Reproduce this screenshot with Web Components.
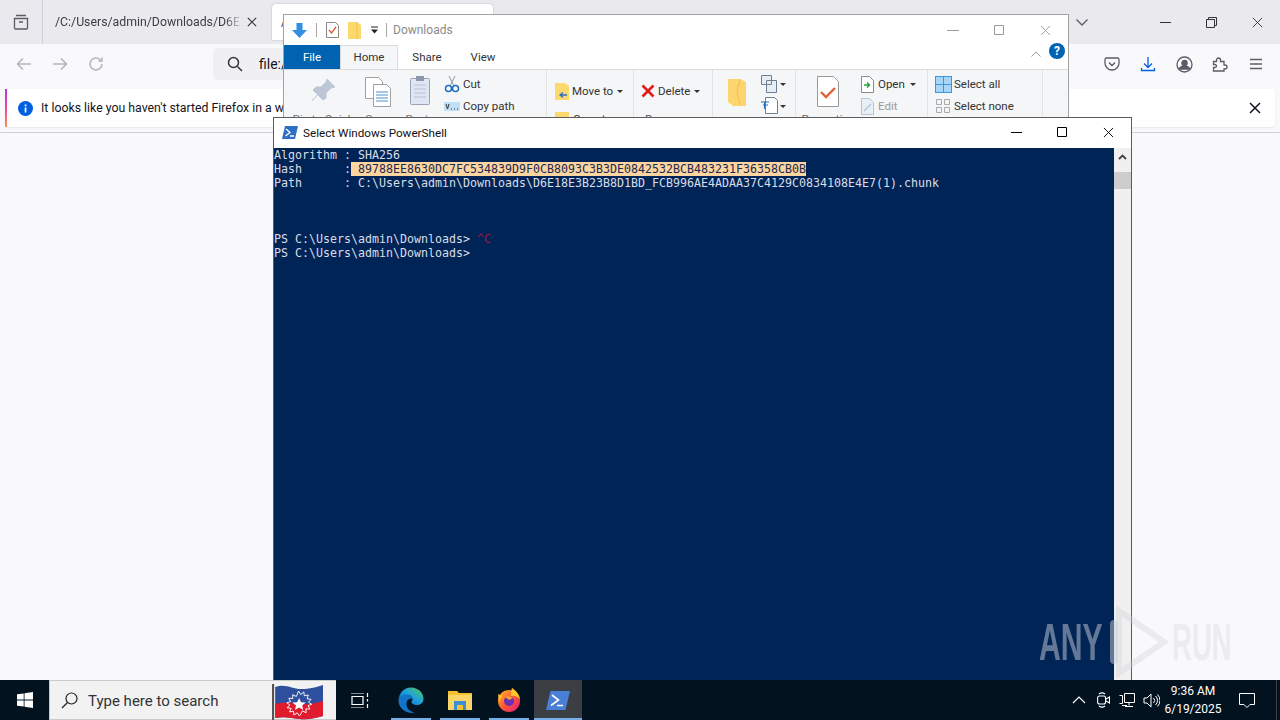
<!DOCTYPE html>
<html>
<head>
<meta charset="utf-8">
<title>Desktop</title>
<style>
  html, body { margin: 0; height: 100%; overflow: hidden; }
  body { font-family: Roboto, "Liberation Sans", sans-serif; background: #f9f9fb; }
</style>
</head>
<body>
<desk-top>
  <firefox-window></firefox-window>
  <explorer-window></explorer-window>
  <ps-window>
    <ps-line>Algorithm : SHA256</ps-line>
    <ps-line>Hash      :<ps-sel> 89788EE8630DC7FC534839D9F0CB8093C3B3DE0842532BCB483231F36358CB0B</ps-sel></ps-line>
    <ps-line>Path      : C:\Users\admin\Downloads\D6E18E3B23B8D1BD_FCB996AE4ADAA37C4129C0834108E4E7(1).chunk</ps-line>
    <ps-line></ps-line>
    <ps-line></ps-line>
    <ps-line></ps-line>
    <ps-line>PS C:\Users\admin\Downloads> <ps-err>^C</ps-err></ps-line>
    <ps-line>PS C:\Users\admin\Downloads></ps-line>
  </ps-window>
  <task-bar></task-bar>
  <any-run></any-run>
</desk-top>

<script>
const XMARK = '<path d="M1 1l10 10M11 1L1 11"/>';

class DeskTop extends HTMLElement {
  connectedCallback() {
    this.attachShadow({ mode: 'open' });
    this.shadowRoot.innerHTML = `
      <style>
        :host { display: block; position: relative; width: 1280px; height: 720px; overflow: hidden; }
      </style>
      <slot></slot>`;
  }
}

class FirefoxWindow extends HTMLElement {
  connectedCallback() {
    this.attachShadow({ mode: 'open' });
    this.shadowRoot.innerHTML = `
      <style>
        :host { display: block; position: absolute; inset: 0 0 40px 0; background: #f9f9fb; color: #15141a; font-size: 12.3px; }
        svg { display: block; fill: none; stroke: #5b5b66; stroke-width: 1.3; }
        .tabs { display: flex; height: 44px; background: #eaeaee; align-items: stretch; }
        .list { width: 42px; border-right: 1px solid #cfcfd8; display: flex; align-items: center; justify-content: center; }
        .tab { width: 229px; display: flex; align-items: center; padding-left: 12px; box-sizing: border-box; color: #3c3c44; }
        .tab span { width: 188px; overflow: hidden; white-space: nowrap; -webkit-mask-image: linear-gradient(90deg,#000 170px,transparent 188px); }
        .tab svg { margin-left: 4px; stroke: #33333a; stroke-width: 1.4; }
        .tab.on { width: 221px; background: #fff; border-radius: 4px 4px 0 0; margin: 4px 0; padding-left: 9px; box-shadow: 0 0 2px rgba(0,0,0,.25); }
        .fill { flex: 1; display: flex; justify-content: flex-end; align-items: center; padding-right: 54px; }
        .ctl { width: 46px; display: flex; align-items: center; justify-content: center; }
        .ctl svg { stroke: #33333a; stroke-width: 1; }
        .bar { display: flex; height: 44px; padding: 0 6px 4px; align-items: center; box-sizing: border-box; }
        .btn { width: 36px; height: 36px; display: flex; align-items: center; justify-content: center; }
        .btn.off svg { stroke: #b4b4bc; stroke-width: 1.5; }
        .url { width: 700px; height: 32px; margin-left: 99px; background: #f0f0f4; border-radius: 4px; display: flex; align-items: center; font-size: 14px; }
        .url svg { margin: 0 16px 0 14px; stroke: #33333a; stroke-width: 1.5; }
        .right { margin-left: auto; display: flex; }
        .note { margin: 1px 5px 0 5px; height: 38px; background: #fff; border-radius: 4px; display: flex; align-items: center; position: relative; box-shadow: 0 1px 2px rgba(0,0,0,.08); }
        .note::before { content: ""; position: absolute; left: 0; top: 0; bottom: 0; width: 2px; background: linear-gradient(#b833e1, #f0469a 50%, #ff8a50); }
        .note svg.i { margin: 0 8px 0 13px; stroke: none; }
        .note .x { position: absolute; right: 14px; stroke: #15141a; stroke-width: 1.5; }
        .rule { margin-top: 5px; border-top: 1px solid #cfcfd8; }
      </style>
      <div class="tabs">
        <div class="list"><svg width="18" height="18" viewBox="0 0 18 18"><path d="M4 2.500h10M2.500 5.500h13v9.500a1 1 0 0 1-1 1h-11a1 1 0 0 1-1-1zM7 9h4"/></svg></div>
        <div class="tab"><span>/C:/Users/admin/Downloads/D6E18E3B23B8D1BD</span><svg width="10" height="10" viewBox="0 0 12 12">${XMARK}</svg></div>
        <div class="tab on">/C:/Users/admin/Downloads/D6</div>
        <div class="fill"><svg width="12" height="7" viewBox="0 0 12 7"><path d="M.500.500L6 6 11.500.500"/></svg></div>
        <div class="ctl"><svg width="11" height="1" viewBox="0 0 11 1"><path d="M0 .500h11"/></svg></div>
        <div class="ctl"><svg width="11" height="11" viewBox="0 0 11 11"><path d="M.500 2.500h8v8h-8zM2.500 2.500v-2h8v8h-2"/></svg></div>
        <div class="ctl"><svg width="11" height="11" viewBox="0 0 12 12">${XMARK}</svg></div>
      </div>
      <div class="bar">
        <div class="btn off"><svg width="16" height="14" viewBox="0 0 16 14"><path d="M15 7H1.500M7 1.500L1.500 7 7 12.500"/></svg></div>
        <div class="btn off"><svg width="16" height="14" viewBox="0 0 16 14"><path d="M1 7h13.500M9 1.500L14.500 7 9 12.500"/></svg></div>
        <div class="btn off"><svg width="16" height="16" viewBox="0 0 16 16"><path d="M14 8a6 6 0 1 1-2-4.500L14 5M14 1.500V5h-3.500"/></svg></div>
        <div class="url"><svg width="16" height="16" viewBox="0 0 16 16"><circle cx="6.500" cy="6.500" r="5"/><path d="M10.500 10.500L15 15"/></svg>file:///C:/Users/admin/Downloads</div>
        <div class="right">
          <div class="btn"><svg width="16" height="16" viewBox="0 0 16 16"><path d="M2.500 2h11A1.500 1.500 0 0 1 15 3.500V7A7 7 0 0 1 1 7V3.500A1.500 1.500 0 0 1 2.500 2zM5 6.500l3 3 3-3"/></svg></div>
          <div class="btn"><svg width="16" height="16" viewBox="0 0 16 16" style="stroke:#0060df"><path d="M8 1v10M4 7.500L8 11.500 12 7.500M1.500 12v2.500h13V12"/></svg></div>
          <div class="btn"><svg width="17" height="17" viewBox="0 0 17 17"><circle cx="8.500" cy="8.500" r="7.500"/><circle cx="8.500" cy="7" r="2.600" fill="#5b5b66"/><path d="M3.500 13a5 3 0 0 1 10 0z" fill="#5b5b66"/></svg></div>
          <div class="btn"><svg width="16" height="16" viewBox="0 0 16 16"><path d="M1.500 5.500h3V4a2 2 0 0 1 4 0v1.500h3.500V9h1a2 2 0 0 1 0 4h-1v2H1.500v-3.500H3a1.500 1.500 0 0 0 0-3H1.500z"/></svg></div>
          <div class="btn"><svg width="14" height="12" viewBox="0 0 14 12"><path d="M1 1.500h12M1 6h12M1 10.500h12"/></svg></div>
        </div>
      </div>
      <div class="note">
        <svg class="i" width="15" height="15" viewBox="0 0 15 15"><circle cx="7.500" cy="7.500" r="7.500" fill="#0060df"/><rect x="6.700" y="6.500" width="1.700" height="5" fill="#fff"/><rect x="6.700" y="3.500" width="1.700" height="1.800" fill="#fff"/></svg>
        It looks like you haven't started Firefox in a while. Do you want to clean it up for a fresh, like-new experience?
        <svg class="x" width="12" height="12" viewBox="0 0 12 12">${XMARK}</svg>
      </div>
      <div class="rule"></div>`;
  }
}

class ExplorerWindow extends HTMLElement {
  connectedCallback() {
    this.attachShadow({ mode: 'open' });
    this.shadowRoot.innerHTML = `
      <style>
        :host { display: block; position: absolute; left: 283px; top: 14px; width: 786px; height: 130px; box-sizing: border-box; border: 1px solid #a3a3a3; background: #fff; font-size: 11.5px; color: #333; overflow: hidden; }
        svg { display: block; flex: none; }
        .title { height: 30px; display: flex; align-items: center; padding-left: 7px; }
        .sep { width: 1px; height: 14px; background: #a9a9a9; margin: 0 8px; }
        .name { color: #8b8b8b; font-size: 12px; margin-bottom: 1px; }
        .caps { margin-left: auto; display: flex; }
        .caps div { width: 46px; height: 30px; display: flex; align-items: center; justify-content: center; }
        .caps svg { stroke: #9a9a9a; fill: none; }
        .menu { height: 24px; display: flex; align-items: stretch; position: relative; }
        .menu div { display: flex; align-items: center; justify-content: center; padding-bottom: 1px; box-sizing: border-box; }
        .file { width: 56px; background: #0063b1; color: #fff; }
        .home { width: 58px; background: #f5f6f7; border: 1px solid #dadbdc; border-bottom: 0; }
        .share { width: 58px; }
        .view { width: 54px; }
        .menu .help { position: absolute; right: 3px; top: -2px; width: 16px; height: 16px; padding: 0; border-radius: 50%; background: #0063b1; color: #fff; font-weight: 700; font-size: 12px; }
        .up { position: absolute; right: 27px; top: 6px; }
        .ribbon { height: 75px; background: #f5f6f7; border-top: 1px solid #dadbdc; display: flex; }
        .grp { border-right: 1px solid #e2e3e4; box-sizing: border-box; position: relative; display: flex; }
        .col { display: flex; flex-direction: column; align-items: center; padding-top: 5px; color: #777; }
        .col svg { height: 34px; margin-bottom: 3px; }
        .stack { display: flex; flex-direction: column; gap: 6px; padding-top: 6px; }
        .row { display: flex; align-items: center; gap: 4px; height: 16px; white-space: nowrap; }
        .row.dim { color: #9a9a9a; }
        .caret { width: 0; height: 0; border: 3px solid transparent; border-top: 3px solid #333; border-bottom: 0; margin-left: 1px; }
      </style>
      <div class="title">
        <svg width="17" height="17" viewBox="0 0 17 17"><path d="M5.500 1h6v7h4.500L8.500 16 1 8h4.500z" fill="#2f8fe0"/></svg>
        <div class="sep"></div>
        <svg width="13" height="16" viewBox="0 0 13 16" style="margin-left:1px"><path d="M.500.500h9l3 3v12h-12z" fill="#fff" stroke="#888"/><path d="M3 8l2.500 3L10 5" fill="none" stroke="#d9573a" stroke-width="1.300"/></svg>
        <svg width="13" height="17" viewBox="0 0 13 17" style="margin-left:9px"><path d="M0 0h9l4 3v14H0z" fill="#fbd96f"/><path d="M9 0v17" stroke="#f0c24a"/></svg>
        <svg width="9" height="8" viewBox="0 0 9 8" style="margin-left:9px"><path d="M1 1h7" stroke="#222"/><path d="M1 3.500h7L4.500 7.500z" fill="#222"/></svg>
        <div class="sep" style="margin:0 6px 0 7px"></div>
        <span class="name">Downloads</span>
        <div class="caps">
          <div><svg width="12" height="1" viewBox="0 0 12 1"><path d="M0 .500h12"/></svg></div>
          <div><svg width="10" height="10" viewBox="0 0 10 10"><path d="M.500.500h9v9h-9z"/></svg></div>
          <div><svg width="11" height="11" viewBox="0 0 12 12">${XMARK}</svg></div>
        </div>
      </div>
      <div class="menu">
        <div class="file">File</div><div class="home">Home</div><div class="share">Share</div><div class="view">View</div>
        <svg class="up" width="10" height="6" viewBox="0 0 10 6"><path d="M.500 5.500L5 1l4.500 4.500" fill="none" stroke="#999"/></svg>
        <div class="help">?</div>
      </div>
      <div class="ribbon">
        <div class="grp" style="width:263px;padding-left:6px">
          <div class="col" style="width:66px">
            <svg width="26" height="34" viewBox="0 0 26 34"><path d="M17 4l8 8-4 1-5 5 0 5-3 2-10-10 3-3 5 0 5-5zM8 19l-6 7" fill="#bcc6d4" stroke="#bcc6d4"/></svg>Pin to Quick</div>
          <div class="col" style="width:44px">
            <svg width="26" height="34" viewBox="0 0 26 34"><path d="M.500 2.500h13l4 4v17h-17z" fill="#fff" stroke="#a0a0a0"/><path d="M8.500 9.500h13l4 4v18h-17z" fill="#fff" stroke="#a0a0a0"/><path d="M11 17h12M11 20h12M11 23h12M11 26h12" stroke="#4a8fd6"/></svg>Copy</div>
          <div class="col" style="width:40px">
            <svg width="20" height="34" viewBox="0 0 20 34"><rect x=".500" y="3.500" width="19" height="26" rx="1" fill="#dfe5f2" stroke="#9aa3b5"/><rect x="6" y="1" width="8" height="5" fill="#8e98ab"/><path d="M4 10h12M4 14h12M4 18h12M4 22h12" stroke="#b8c2d6"/></svg>Paste</div>
          <div class="stack" style="padding-left:4px">
            <div class="row" style="gap:3px"><svg width="16" height="18" viewBox="0 0 16 18"><path d="M5 1l5 10M11 1L6 11" stroke="#8a9bb0"/><circle cx="4.500" cy="13.500" r="3" fill="none" stroke="#1e6fc0" stroke-width="1.500"/><circle cx="11.500" cy="13.500" r="3" fill="none" stroke="#1e6fc0" stroke-width="1.500"/></svg>Cut</div>
            <div class="row" style="gap:3px"><svg width="16" height="9" viewBox="0 0 16 9"><rect width="16" height="9" fill="#bfe0f7"/><path d="M2 2l1.500 5L5 2M7 7h1M10 7h1M13 7h1" stroke="#333" fill="none"/></svg>Copy path</div>
          </div>
        </div>
        <div class="grp" style="width:87px;padding:4px 0 0 8px">
          <div class="stack" style="padding:0;gap:12px">
            <div class="row" style="margin-top:9px;gap:3px"><svg width="14" height="17" viewBox="0 0 14 17"><path d="M0 0h10l4 3v14H0z" fill="#fbd96f"/><path d="M12 12H6M8 9.500L5 12l3 2.500" fill="none" stroke="#2f6fc0" stroke-width="1.300"/></svg>Move to<i class="caret"></i></div>
            <div class="row"><svg width="14" height="14" viewBox="0 0 14 14"><path d="M0 0h14v14H0z" fill="#fbd96f"/></svg>Copy to<i class="caret"></i></div>
          </div>
        </div>
        <div class="grp" style="width:79px;padding:13px 0 0 7px">
          <div class="stack" style="padding:0;gap:12px">
            <div class="row" style="gap:3px"><svg width="14" height="14" viewBox="0 0 14 14"><path d="M1.500 1.500l11 11M12.500 1.500l-11 11" stroke="#e01c1c" stroke-width="2.600"/></svg>Delete<i class="caret"></i></div>
            <div class="row" style="color:#555;padding-left:4px">Rename</div>
          </div>
        </div>
        <div class="grp" style="width:83px;padding-left:11px">
          <div class="col" style="width:26px;padding-top:7px;color:#666">
            <svg width="20" height="32" viewBox="0 0 20 32"><path d="M1 1h12l6 3v24H6l-5-4z" fill="#fcd56f"/><path d="M13 1l-3 12 3 14" fill="none" stroke="#f2bf4c"/></svg>New</div>
          <div class="stack" style="padding:6px 0 0 11px;gap:6px">
            <div class="row" style="gap:0"><svg width="18" height="18" viewBox="0 0 18 18"><path d="M.500.500h10v9h-10zM5.500 5.500h10v12h-10z" fill="#e6edf5" stroke="#6f7f92"/></svg><i class="caret"></i></div>
            <div class="row" style="gap:0"><svg width="18" height="18" viewBox="0 0 18 18"><path d="M4.500.500h9l3 3v13h-12z" fill="#fff" stroke="#6f7f92"/><path d="M0 5h8M2 8h5M3.500 5v7" stroke="#1e6fc0"/></svg><i class="caret"></i></div>
          </div>
        </div>
        <div class="grp" style="width:132px;padding-left:4px">
          <div class="col" style="width:56px;color:#666">
            <svg width="22" height="34" viewBox="0 0 22 34"><path d="M.500 1.500h16l5 5v25h-21z" fill="#fff" stroke="#999"/><path d="M4 17l5 5 9-9" fill="none" stroke="#e2603a" stroke-width="2.400"/></svg>Properties</div>
          <div class="stack" style="padding:6px 0 0 5px;gap:6px">
            <div class="row"><svg width="13" height="17" viewBox="0 0 13 17"><path d="M.500.500h8l4 4v12h-12z" fill="#fff" stroke="#8a8a8a"/><path d="M3 9h5M6 6.500L8.500 9 6 11.500" stroke="#2fa33a" fill="none" stroke-width="1.500"/></svg>Open<i class="caret"></i></div>
            <div class="row dim"><svg width="13" height="17" viewBox="0 0 13 17"><path d="M.500.500h8l4 4v12h-12z" fill="#e8eff6" stroke="#b6c4d2"/><path d="M3 13L10 6" stroke="#b6c4d2" stroke-width="1.500"/></svg>Edit</div>
          </div>
        </div>
        <div class="grp" style="width:115px;padding-left:7px">
          <div class="stack" style="padding-top:6px;gap:6px">
            <div class="row" style="gap:2px"><svg width="17" height="17" viewBox="0 0 17 17"><rect width="17" height="17" fill="#3b96e4"/><path d="M1 1h7v7H1zM9 1h7v7H9zM1 9h7v7H1zM9 9h7v7H9z" fill="#a9d5f7"/></svg>Select all</div>
            <div class="row" style="gap:3px"><svg width="14" height="14" viewBox="0 0 14 14" style="margin:0 1px"><path d="M.500.500h5v5h-5zM8.500.500h5v5h-5zM.500 8.500h5v5h-5zM8.500 8.500h5v5h-5z" fill="none" stroke="#aaa"/></svg>Select none</div>
          </div>
        </div>
      </div>`;
  }
}

class PsWindow extends HTMLElement {
  connectedCallback() {
    this.attachShadow({ mode: 'open' });
    this.shadowRoot.innerHTML = `
      <style>
        :host { display: flex; flex-direction: column; position: absolute; left: 273px; top: 117px; width: 859px; height: 563px; box-sizing: border-box; border: 1px solid #5c5c5c; border-bottom: 0; background: #fff; }
        .title { height: 30px; display: flex; align-items: center; font-size: 11.7px; color: #111; padding-left: 8px; flex: none; }
        .title span { margin: 0 0 1px 5px; }
        .caps { margin-left: auto; display: flex; }
        .caps div { width: 46px; height: 30px; display: flex; align-items: center; justify-content: center; padding-bottom: 2px; box-sizing: border-box; }
        .caps svg { display: block; fill: none; stroke: #000; }
        .body { flex: 1; display: flex; min-height: 0; }
        .console { flex: 1; background: #012456; color: #d9dde7; font: 11.63px/14px "DejaVu Sans Mono", monospace; overflow: hidden; }
        .scroll { width: 17px; background: #f0f0f0; display: flex; flex-direction: column; align-items: center; }
        .arrow { height: 17px; display: flex; align-items: center; justify-content: center; }
        .thumb { width: 100%; height: 17px; margin-top: 7px; background: #cdcdcd; }
      </style>
      <div class="title">
        <svg width="16" height="13" viewBox="0 0 16 13" style="margin-bottom:2px"><path d="M3 0h13l-3 13H0z" fill="#2c6fc4"/><path d="M4 3l4 3.500L3.500 10M8 10h4" fill="none" stroke="#fff" stroke-width="1.300"/></svg>
        <span>Select Windows PowerShell</span>
        <div class="caps">
          <div style="width:45px"><svg width="11" height="1" viewBox="0 0 11 1"><path d="M0 .500h11"/></svg></div>
          <div><svg width="10" height="10" viewBox="0 0 10 10"><path d="M.500.500h9v9h-9z"/></svg></div>
          <div><svg width="11" height="11" viewBox="0 0 12 12">${XMARK}</svg></div>
        </div>
      </div>
      <div class="body">
        <div class="console"><slot></slot></div>
        <div class="scroll">
          <div class="arrow"><svg width="9" height="6" viewBox="0 0 9 6"><path d="M1 5l3.500-3.500L8 5" fill="none" stroke="#444" stroke-width="1.800"/></svg></div>
          <div class="thumb"></div>
        </div>
      </div>`;
  }
}

// no whitespace in these three shadow roots: the console text runs in white-space: pre
class PsLine extends HTMLElement {
  connectedCallback() {
    this.attachShadow({ mode: 'open' });
    this.shadowRoot.innerHTML = '<style>:host { display: block; height: 14px; white-space: pre; }</style><slot></slot>';
  }
}

class PsSel extends HTMLElement {
  connectedCallback() {
    this.attachShadow({ mode: 'open' });
    this.shadowRoot.innerHTML = '<style>:host { display: inline-block; height: 14px; background: #fdd5a0; color: #1b2a50; }</style><slot></slot>';
  }
}

class PsErr extends HTMLElement {
  connectedCallback() {
    this.attachShadow({ mode: 'open' });
    this.shadowRoot.innerHTML = '<style>:host { color: #a01540; }</style><slot></slot>';
  }
}

class TaskBar extends HTMLElement {
  connectedCallback() {
    this.attachShadow({ mode: 'open' });
    this.shadowRoot.innerHTML = `
      <style>
        :host { display: flex; position: absolute; left: 0; right: 0; bottom: 0; height: 40px; background: #03121f; color: #fff; font-size: 12px; }
        svg { display: block; flex: none; }
        .start { width: 49px; display: flex; align-items: center; justify-content: center; }
        .search { width: 287px; box-sizing: border-box; background: #f2f2f2; border: 1px solid #c8c8c8; border-width: 1px 0 1px 1px; display: flex; align-items: center; color: #333; font-size: 15px; padding: 1px 0 0 11px; gap: 10px; position: relative; }
        .flag { position: absolute; left: 222px; top: 2px; }
        .task { width: 48px; display: flex; align-items: center; justify-content: center; position: relative; margin-right: 1px; }
        .task.run::after { content: ""; position: absolute; left: 4px; right: 4px; bottom: 0; height: 2px; background: #76aee6; }
        .task.active { background: #3b3e43; margin-right: 0; }
        .task.active::after { left: 0; right: 0; }
        .tray { margin-left: auto; display: flex; align-items: center; padding-right: 9px; position: relative; }
        .tray .t { width: 24px; display: flex; justify-content: center; }
        .tray .t svg { stroke: #fff; fill: none; }
        .clock { width: 60px; text-align: center; line-height: 18px; font-size: 12px; }
        .msg { width: 48px; display: flex; justify-content: center; }
        .edge { position: absolute; right: 3px; top: 0; bottom: 0; width: 1px; background: #3b3e43; }
      </style>
      <div class="start"><svg width="16" height="16" viewBox="0 0 16 16" fill="#fff"><path d="M0 2.300l6.700-.9v6.200H0zM7.500 1.300L16 0v7.600H7.500zM0 8.400h6.700v6.200L0 13.700zM7.500 8.400H16V16l-8.500-1.200z"/></svg></div>
      <div class="search">
        <svg width="17" height="17" viewBox="0 0 17 17" fill="none" stroke="#222" stroke-width="1.200"><circle cx="10.500" cy="6.500" r="5.500"/><path d="M6.500 10.500L1 16"/></svg>
        Type here to search
        <svg class="flag" width="51" height="38" viewBox="0 0 48 38" preserveAspectRatio="none">
          <path d="M1 1v37" stroke="#555" stroke-width="2"/>
          <path d="M3 4c10-4 16 2 24 2 9 0 15-2 21-4v31c-8 2-13 4-22 3-8-1-14-3-23-1z" fill="#2d4f9e"/>
          <path d="M3 21c9-2 15-1 23 0 9 1 15-1 22-3v15c-8 2-13 4-22 3-8-1-14-3-23-1z" fill="#e01b2e"/>
          <path d="M25 8l2 3.500 3-2.500.4 3.800 3.800-.8-1.200 3.700 3.800.6-2.500 2.900 3.100 2.100-3.500 1.400 1.800 3.400-3.800-.2.200 3.800-3.400-1.700L25.800 33l-2.100-3.200-3.100 2.200-.3-3.800-3.800.7 1.500-3.500-3.800-.7 2.700-2.700-3-2.200 3.600-1.200-1.700-3.400 3.800.3-.1-3.800 3.400 1.800z" fill="none" stroke="#fff" stroke-width=".9"/>
          <path d="M25.500 15l1.800 4.200 4.500.4-3.400 2.900 1 4.400-3.900-2.400-3.900 2.400 1-4.400-3.400-2.900 4.500-.4z" fill="#fff"/>
        </svg>
      </div>
      <div class="task" style="margin-right:3px"><svg width="20" height="15" viewBox="0 0 20 15" fill="none" stroke="#fff" stroke-width="1.200"><path d="M1 0h13M2 3.500h11v8H2zM1 15h13M17.500 0v4M17.500 6v2.500M17.500 11v4"/></svg></div>
      <div class="task run"><svg width="26" height="26" viewBox="0 0 26 26"><defs><linearGradient id="e1" x1="0" y1="1" x2="1" y2="0"><stop offset="0" stop-color="#0c59a4"/><stop offset=".5" stop-color="#1ba0e2"/><stop offset="1" stop-color="#54c84e"/></linearGradient></defs><path d="M13 .500C20 .500 25.500 5.500 25.500 12c0 4-3.500 6-7 6-2.500 0-5-1-5-3 0-1 1-1.500 1-3 0-2.500-2.500-4-5-4C5.500 8 1 11 .500 14 .500 6 6 .500 13 .500z" fill="url(#e1)"/><path d="M.500 14c.500-4 5-6.500 8.500-6.500 3 0 5.500 1.500 5.500 4.500-2.500-1-6 .500-6 5 0 4 3 7.500 8 8.500-1 .300-2 .500-3.500.500C6 25.500.500 20 .500 14z" fill="#1174c8"/></svg></div>
      <div class="task run"><svg width="24" height="20" viewBox="0 0 24 20"><path d="M0 1h9l2 2h13v4H0z" fill="#f5c331"/><path d="M0 5h24v15H0z" fill="#fbd566"/><path d="M6 11h12v9h-3v-5H9v5H6z" fill="#3d8fd1"/><path d="M9 15h6v5H9z" fill="#f5c331"/></svg></div>
      <div class="task run"><svg width="24" height="24" viewBox="0 0 24 24"><defs><linearGradient id="f1" x1="0" y1="0" x2="1" y2="1"><stop offset="0" stop-color="#ffbd2e"/><stop offset=".5" stop-color="#ff5a2b"/><stop offset="1" stop-color="#e31587"/></linearGradient></defs><circle cx="12" cy="13" r="11" fill="url(#f1)"/><path d="M15 0c3 2 7 5 8 11-3-3-7-4-9-3 0-3 0-5 1-8zM1 6l4 2-3 5z" fill="#ffc62e"/><circle cx="12" cy="13" r="5" fill="#6a2fb5"/><path d="M8 9c3-2 6-1 8 1l-4 2z" fill="#ff9a2e"/></svg></div>
      <div class="task run active"><svg width="24" height="19" viewBox="0 0 24 19"><path d="M4.500 0H24l-4.500 19H0z" fill="#4a7fd6"/><path d="M6 4l6.500 5L5 14.500M11 14.500h6" fill="none" stroke="#fff" stroke-width="1.600"/></svg></div>
      <div class="tray">
        <div class="t"><svg width="14" height="8" viewBox="0 0 14 8"><path d="M1 7l6-6 6 6" stroke-width="1.200"/></svg></div>
        <div class="t"><svg width="13" height="16" viewBox="0 0 13 16" stroke-width="1.100"><rect x=".600" y="4" width="8" height="8" rx="2"/><path d="M9 7l3.500-2v6L9 9M2 2c2-1.500 4-1.500 6 0M2 14c2 1.500 4 1.500 6 0"/></svg></div>
        <div class="t"><svg width="16" height="16" viewBox="0 0 16 16" stroke-width="1"><path d="M5.500 1.500h10v9h-10zM.500 3.500h3v8h-3M10 10.500v3M6 14.500h8M3 13.500h5"/></svg></div>
        <div class="t"><svg width="17" height="15" viewBox="0 0 17 15" stroke-width="1"><path d="M1 5h3l4-4v13l-4-4H1zM10.500 5a3.500 3.500 0 0 1 0 5M12.500 3a6 6 0 0 1 0 9M14.500 1.500a8.500 8.500 0 0 1 0 12"/></svg></div>
        <div class="clock">9:36 AM<br>6/19/2025</div>
        <div class="msg"><svg width="16" height="15" viewBox="0 0 16 15" fill="none" stroke="#fff"><path d="M.500.500h15v11H11L8 14.500 5 11.500H.500z"/></svg></div>
        <div class="edge"></div>
      </div>`;
  }
}

class AnyRun extends HTMLElement {
  connectedCallback() {
    this.attachShadow({ mode: 'open' });
    this.shadowRoot.innerHTML = `
      <style>
        :host { display: flex; position: absolute; left: 1039px; top: 606px; height: 72px; align-items: center; font: 700 52px "Liberation Sans", sans-serif; color: rgba(200,205,216,.5); pointer-events: none; }
        span { display: block; width: 63px; transform: scaleX(.58); transform-origin: left center; }
        svg { display: block; margin-left: 8px; }
        .run { width: 60px; margin-left: 4px; transform: scaleX(.53); color: rgba(205,205,212,.28); }
      </style>
      <span>ANY</span>
      <svg width="58" height="72" viewBox="0 0 58 72"><path d="M4 18v36" stroke="rgba(200,205,216,.5)" stroke-width="8" stroke-linecap="round"/><path d="M9 5l45 31-45 31z" fill="none" stroke="rgba(205,208,216,.35)" stroke-width="6"/></svg>
      <span class="run">RUN</span>`;
  }
}

customElements.define('desk-top', DeskTop);
customElements.define('firefox-window', FirefoxWindow);
customElements.define('explorer-window', ExplorerWindow);
customElements.define('ps-window', PsWindow);
customElements.define('ps-line', PsLine);
customElements.define('ps-sel', PsSel);
customElements.define('ps-err', PsErr);
customElements.define('task-bar', TaskBar);
customElements.define('any-run', AnyRun);
</script>
</body>
</html>
